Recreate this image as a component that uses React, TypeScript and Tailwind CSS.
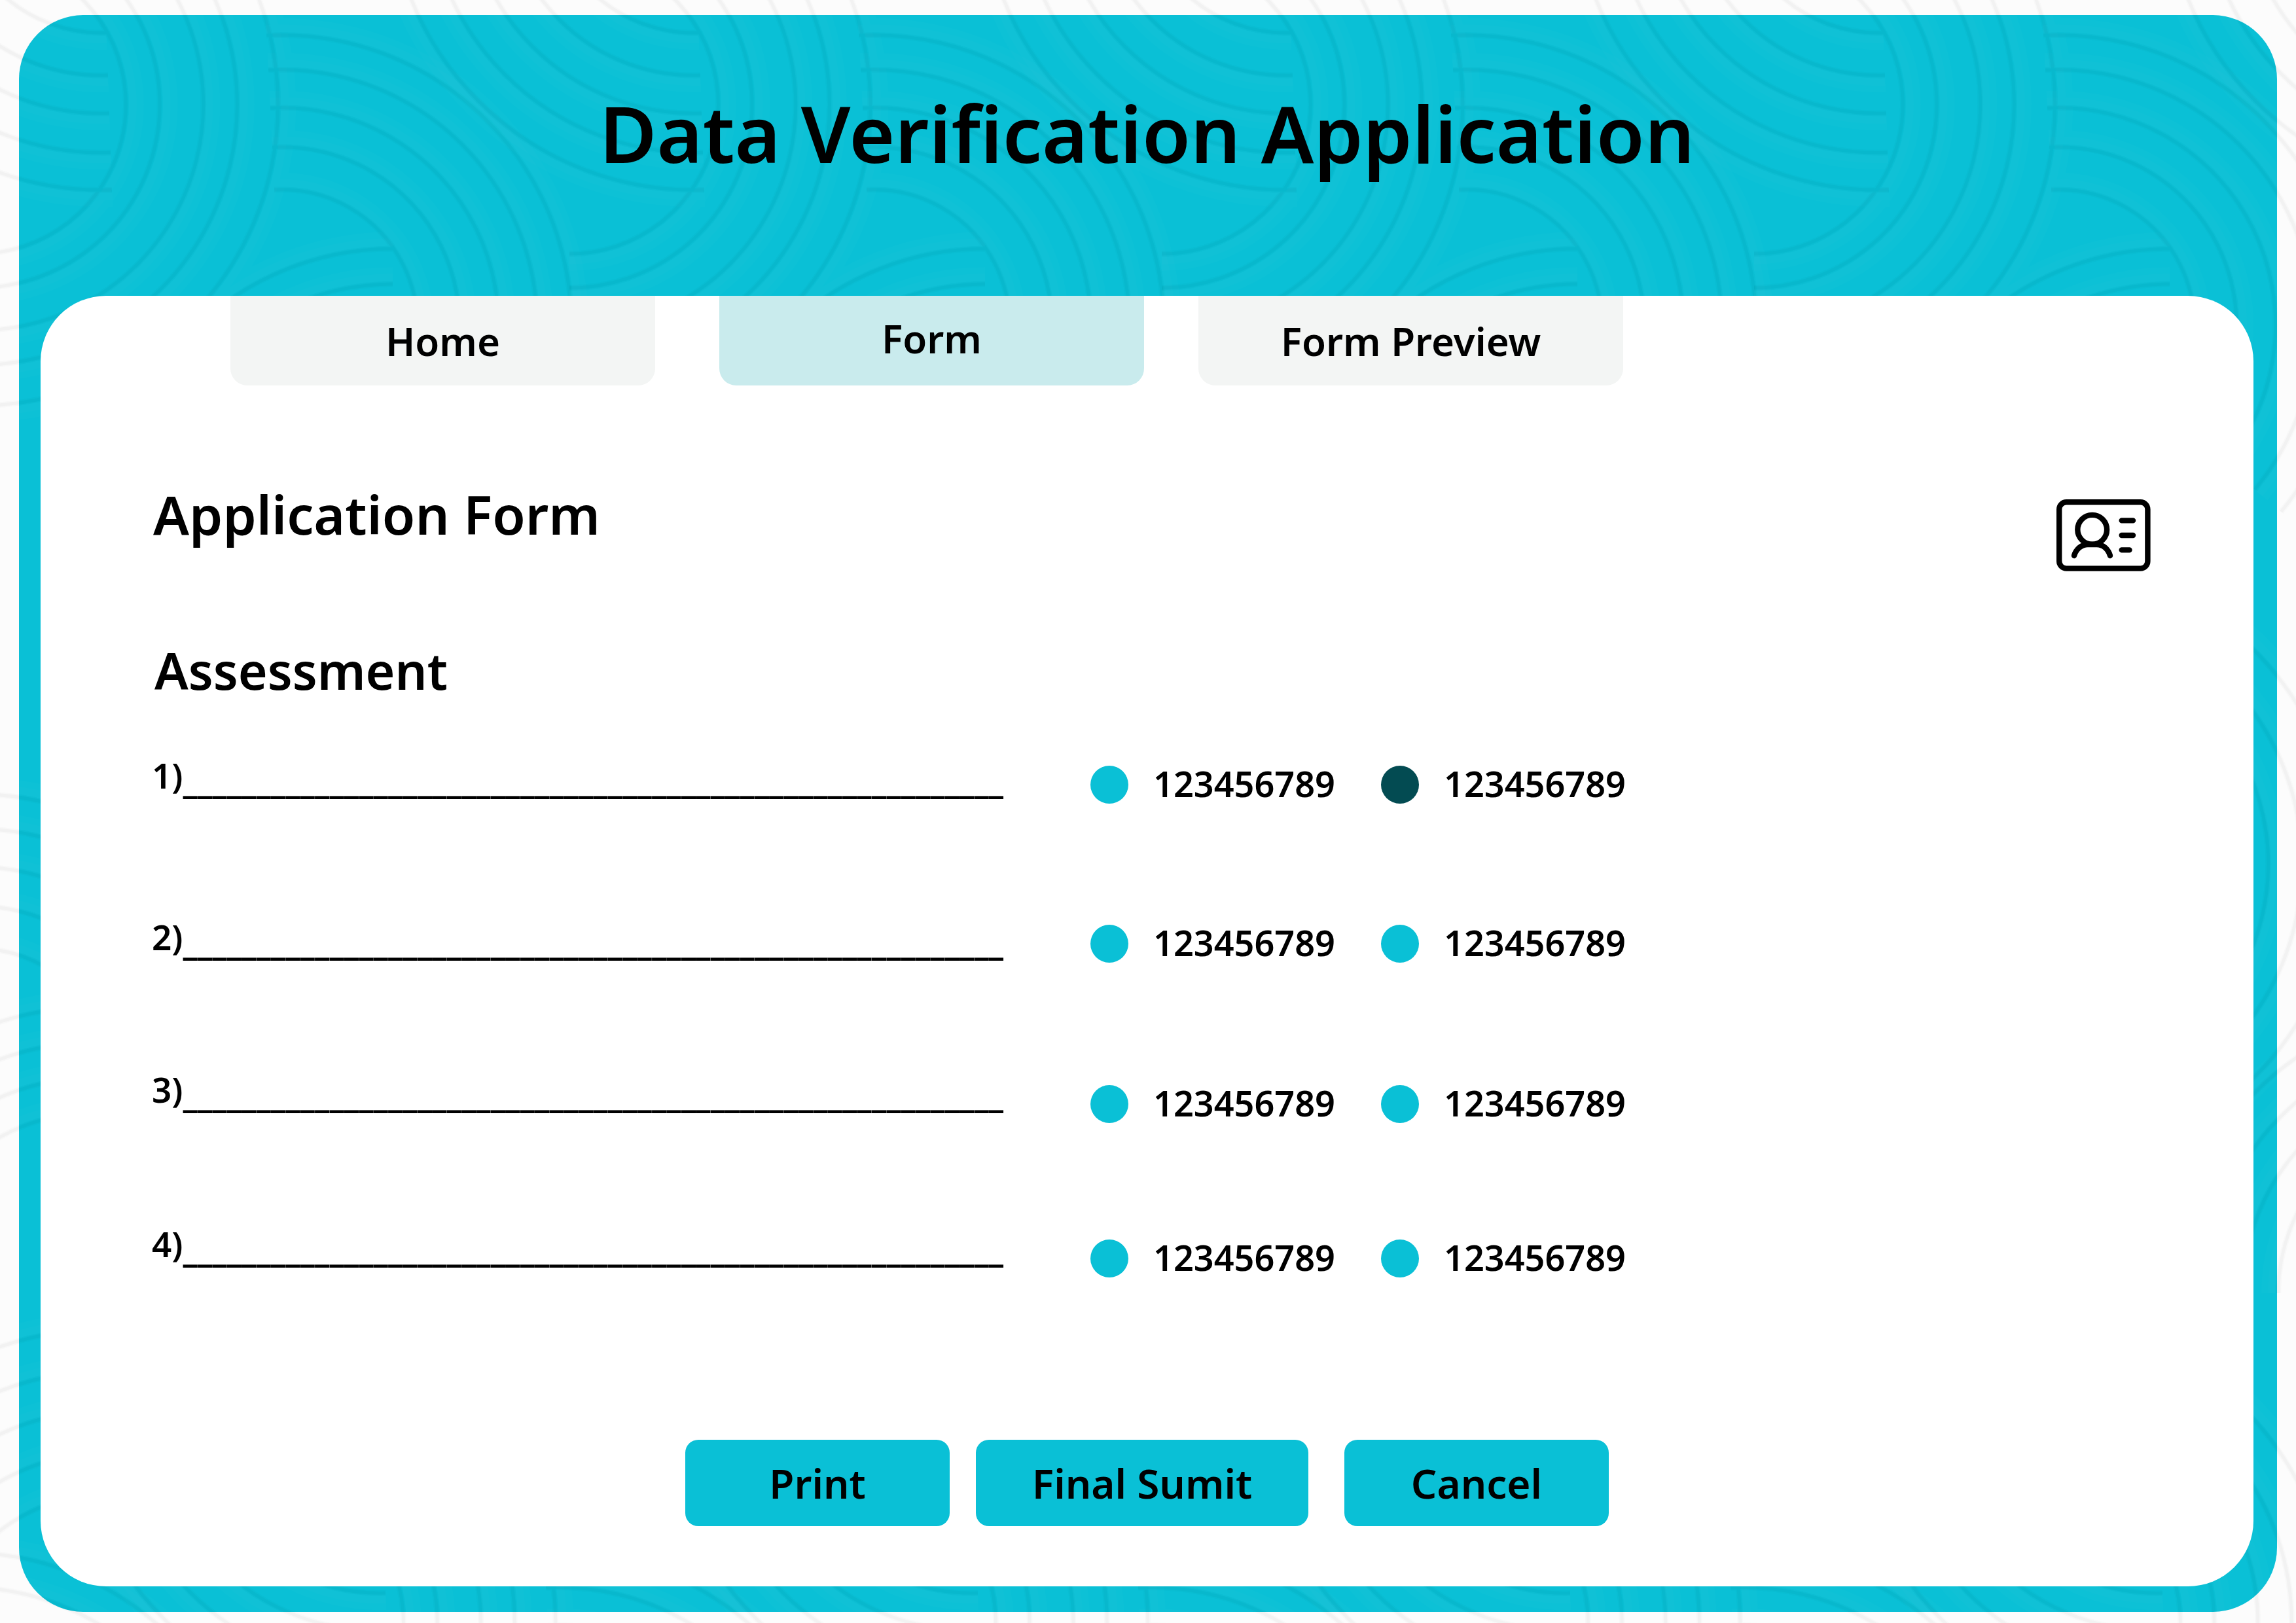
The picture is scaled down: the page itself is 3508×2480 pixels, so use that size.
import { useState } from "react";

const TILE = 905;

type Ring = { cx: number; cy: number; radii: number[]; from: number; to: number };

const motif: Ring[] = [
  { cx: -35, cy: 160, radii: [228, 280, 345, 398, 460], from: -62, to: 90 },
  { cx: 155, cy: -175, radii: [225, 290, 348, 408, 465], from: 88, to: 182 },
  { cx: 430, cy: 497, radii: [207, 272, 332, 391, 444], from: -93, to: 40 },
  { cx: 600, cy: 816, radii: [274, 328, 382, 436], from: 180, to: 270 },
];

const corner: Ring[] = [{ cx: 170, cy: 2560, radii: [279, 341, 406, 467, 530], from: 185, to: 262 }];

function arc(cx: number, cy: number, r: number, from: number, to: number) {
  const point = (deg: number) => {
    const a = (deg * Math.PI) / 180;
    return `${Math.round(cx + r * Math.cos(a))} ${Math.round(cy + r * Math.sin(a))}`;
  };
  return `M${point(from)}A${r} ${r} 0 0 1 ${point(to)}`;
}

function Rings({ rings }: { rings: Ring[] }) {
  const draw = (shift: number) =>
    rings.flatMap(({ cx, cy, radii, from, to }) => radii.map((r) => arc(cx, cy, r + shift, from, to))).join("");
  return (
    <g fill="none">
      <path d={draw(14)} stroke="#fff" strokeOpacity="0.015" strokeWidth="24" />
      <path d={draw(10)} stroke="#fff" strokeOpacity="0.015" strokeWidth="12" />
      <path d={draw(0)} stroke="#000" strokeOpacity="0.016" strokeWidth="9" />
      <path d={draw(0)} stroke="#000" strokeOpacity="0.022" strokeWidth="5" />
    </g>
  );
}

function WavePattern() {
  const bands = [
    { x: 0, y: 0 },
    { x: 440, y: 1160 },
    { x: 424, y: 2319 },
  ];
  return (
    <svg aria-hidden="true" className="pointer-events-none absolute inset-0 h-full w-full">
      {bands.map(({ x, y }) =>
        [-1, 0, 1, 2, 3, 4].map((i) => (
          <g key={`${y}-${i}`} transform={`translate(${x + i * TILE - (y ? TILE : 0)} ${y})`}>
            <Rings rings={y > 2000 ? motif.slice(0, 3) : motif} />
          </g>
        )),
      )}
      <Rings rings={corner} />
    </svg>
  );
}

function IdCardIcon() {
  return (
    <svg
      role="img"
      aria-label="Identity card"
      viewBox="0 0 144 110"
      className="mt-7 h-[110px] w-36 shrink-0"
      fill="none"
      stroke="currentColor"
      strokeWidth="8.4"
      strokeLinecap="round"
    >
      <rect x="4.2" y="4.2" width="135.2" height="101.4" rx="11" />
      <circle cx="54.7" cy="46.3" r="22.4" />
      <path d="M27 86C30 76 38 69 48 69H61.500C71.500 69 79 76 82 86" />
      <path d="M99.700 32.400H117M99.700 55H117M99.700 77.400H111.500" />
    </svg>
  );
}

const tabs = [
  { name: "Home", place: "" },
  { name: "Form", place: "ml-[98px]" },
  { name: "Form Preview", place: "ml-[83px]" },
];

const BLANK = "_".repeat(56);

const rows = [
  { id: 1, height: "h-[243px]", lead: "pt-2" },
  { id: 2, height: "h-[245px]", lead: "pt-3" },
  { id: 3, height: "h-[236px]", lead: "pt-0" },
  { id: 4, height: "h-20", lead: "pt-0" },
];

const options = ["a", "b"];

export default function App() {
  const [tab, setTab] = useState("Form");
  const [answers, setAnswers] = useState<Record<number, string>>({ 1: "b" });

  return (
    <div className="relative flex min-h-screen flex-col bg-[#fcfcfc] px-[29px] pt-[23px] pb-[17px] font-['Noto_Sans',sans-serif] font-semibold text-black">
      <div className="flex flex-1 flex-col rounded-[98px] bg-[#0ac0d6] pr-9 pb-[39px] pl-[33px]">
        <WavePattern />
        <header className="relative h-[429px] pt-[105px] text-center">
          <h1 className="text-[120px] leading-[150px]">Data Verification Application</h1>
        </header>

        <main className="relative flex flex-1 flex-col rounded-[100px] bg-white pb-[92px]">
          <nav className="flex pl-[290px]">
            {tabs.map(({ name, place }) => (
              <button
                key={name}
                type="button"
                onClick={() => setTab(name)}
                aria-current={tab === name ? "page" : undefined}
                className={`h-[137px] w-[649px] rounded-b-[26px] text-[60px] leading-[72px] ${place} ${
                  tab === name ? "bg-[#c9ebed] pb-2" : "bg-[#f3f5f4]"
                }`}
              >
                {name}
              </button>
            ))}
          </nav>

          <div className="mt-[146px] flex items-start justify-between pr-[157px] pl-[172px]">
            <h2 className="text-[82px] leading-[100px]">Application Form</h2>
            <IdCardIcon />
          </div>

          <form className="flex flex-1 flex-col" onSubmit={(e) => e.preventDefault()}>
            <h3 className="mt-[102px] pl-[174px] text-[77px] leading-[100px]">Assessment</h3>
            <div className="mt-[73px] pl-[170px]">
              {rows.map(({ id, height, lead }) => (
                <div
                  key={id}
                  role="radiogroup"
                  aria-labelledby={`question-${id}`}
                  className={`flex items-start ${height}`}
                >
                  <div
                    id={`question-${id}`}
                    className={`flex w-[1434px] text-[53px] leading-[58px] whitespace-nowrap ${lead}`}
                  >
                    {id})
                    <span className="pt-3.5 font-['Roboto',sans-serif] text-[50px] font-medium">{BLANK}</span>
                  </div>
                  <div className="flex pt-[22px]">
                    {options.map((option) => (
                      <label key={option} className="flex w-[444px] items-start gap-[38px] text-[54px] leading-[54px]">
                        <input
                          type="radio"
                          name={`answer-${id}`}
                          checked={answers[id] === option}
                          onChange={() => setAnswers({ ...answers, [id]: option })}
                          className="size-[58px] shrink-0 appearance-none rounded-full bg-[#0ac0d6] checked:bg-[#034b52]"
                        />
                        123456789
                      </label>
                    ))}
                  </div>
                </div>
              ))}
            </div>

            <div className="mt-auto flex justify-center text-[62px] leading-[76px]">
              <button type="button" className="h-[132px] w-[404px] rounded-[20px] bg-[#0ac0d6]">
                Print
              </button>
              <button type="submit" className="ml-10 h-[132px] w-[508px] rounded-[20px] bg-[#0ac0d6]">
                Final Sumit
              </button>
              <button type="button" className="ml-[55px] h-[132px] w-[404px] rounded-[20px] bg-[#0ac0d6]">
                Cancel
              </button>
            </div>
          </form>
        </main>
      </div>
    </div>
  );
}
